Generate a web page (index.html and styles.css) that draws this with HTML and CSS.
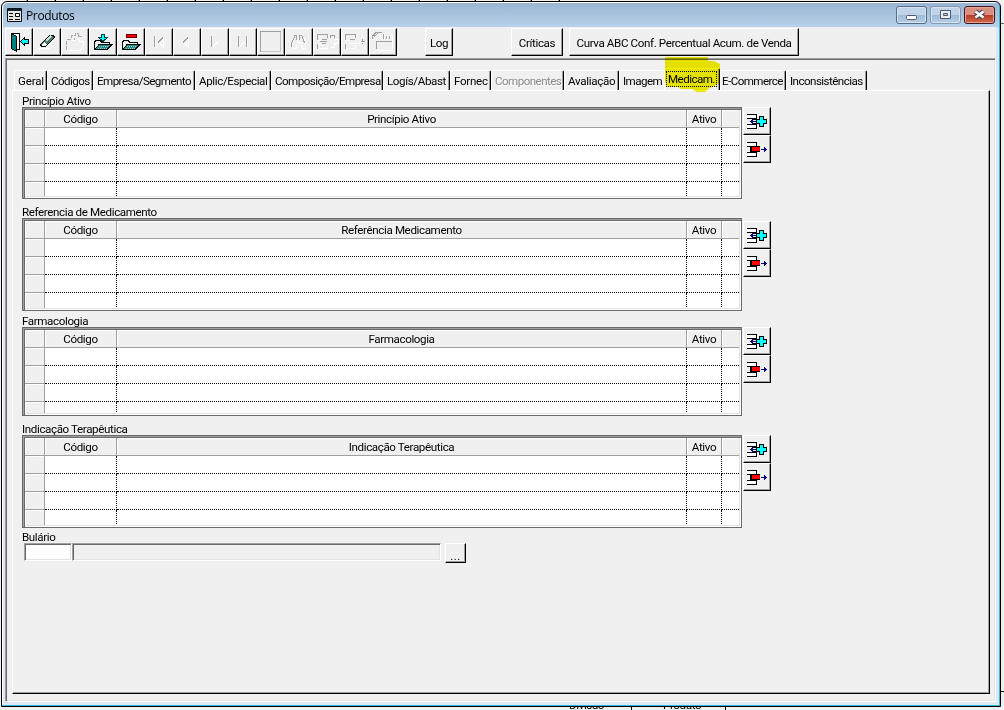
FILE: index.html
```html
<!DOCTYPE html>
<html lang="pt-BR">
<head>
  <meta charset="UTF-8">
  <title>Produtos</title>
  <link rel="stylesheet" href="styles.css">
</head>
<body>
  <svg class="symbols" width="0" height="0">
    <symbol id="row-add" viewBox="0 0 28 28">
      <path d="M4 7h10v5H4zM4 16h10v5H4z" fill="#fff"/>
      <path d="M4 7.500h9.500v4H4M4 21.500h9.500v-4H4M10 12.500h5M10 16.500h5" fill="none" stroke="#000"/>
      <path d="M7 14.500h6M9.500 12v5M8.500 13v3" stroke="#000080" fill="none"/>
      <path d="M16.500 9.500h4v3h3v4h-3v3h-4v-3h-3v-4h3z" fill="#00ffff" stroke="#000"/>
    </symbol>
    <symbol id="row-del" viewBox="0 0 28 28">
      <path d="M4 7h10v5H4zM4 16h10v5H4z" fill="#fff"/>
      <path d="M4 7.500h9.500v4H4M4 21.500h9.500v-4H4" fill="none" stroke="#000"/>
      <path d="M7 12h2v5H7z" fill="#000"/>
      <path d="M8 11h9v6H8z" fill="#000"/>
      <path d="M9 12h8v4H9z" fill="#f00"/>
      <path d="M18 14.500h6M21.500 12v5M22.500 13v3" stroke="#000080"/>
    </symbol>
    <symbol id="folder" viewBox="0 0 28 28">
      <path d="M5.500 21.500v-8l2-1h4l1 2h8v3" fill="#efefef" stroke="#000"/>
      <path d="M6 21.500l4-5h13l-5 5z" fill="#2f8a8a" stroke="#000"/>
      <path d="M10 18.500h10M9 20.500h9" stroke="#8cc" stroke-dasharray="1 1"/>
    </symbol>
  </svg>

  <div class="backdrop">
    <div class="strip"></div>
    <div class="below"><span>Divisão</span><span>Produto</span></div>
    <div class="edge"></div>
  </div>

  <div class="window">
    <div class="titlebar">
      <svg class="app-icon" width="15" height="14" viewBox="0 0 15 14">
        <path d="M.5.5h14v13H.5z" fill="#e6e6e6" stroke="#111"/>
        <path d="M1 1h13v2H1z" fill="#123"/>
        <path d="M2 5.500h4M2 8.500h4M2 11.500h4M8 11.500h5" stroke="#000"/>
        <path d="M8.500 5.500h4v3h-4z" fill="#fff" stroke="#000"/>
      </svg>
      <span class="title">Produtos</span>
      <div class="caption">
        <button><svg width="29" height="16"><rect x="9.500" y="8.500" width="10" height="4" rx="1" fill="#fff" stroke="#535666"/></svg></button>
        <button class="max"><svg width="29" height="16"><path d="M9.500 3.500h10v8h-10z" fill="#e8eef5" stroke="#535666"/><path d="M12.500 6.500h4v2h-4z" fill="#b9cce0" stroke="#535666"/></svg></button>
        <button class="close"><svg width="29" height="16"><path d="M10.500 4.500l8 6M18.500 4.500l-8 6" stroke="#4a4558" stroke-width="4.800"/><path d="M10.500 4.500l8 6M18.500 4.500l-8 6" stroke="#fff" stroke-width="2.600"/></svg></button>
      </div>
    </div>

    <div class="toolbar">
      <button class="tool"><svg viewBox="0 0 28 28">
        <path d="M6.500 20V5.500h8V21H12" fill="#fff" stroke="#000"/>
        <path d="M6.500 5.500l5 3v15l-5-3z" fill="#008080" stroke="#000"/>
        <path d="M15.500 13.500l4-4v2h4v4h-4v2z" fill="#00ffff" stroke="#000"/>
      </svg></button>
      <button class="tool"><svg viewBox="0 0 28 28">
        <path d="M5 20.500h12" stroke="#fff"/>
        <path d="M7.500 16.500l9-9h4l1 2-9 9h-4z" fill="#507878" stroke="#000"/>
        <path d="M8 17l3-3 3 3-2 1H9z" fill="#fff"/>
        <path d="M13 13l5-5" stroke="#cdd" stroke-width="2"/>
      </svg></button>
      <button class="tool"><svg viewBox="0 0 28 28">
        <path d="M5.500 21.500v-10h4M10 9.500v-2h4v-2h3v3h4M13.500 13v-3" fill="none" stroke="#a8a8a8" stroke-dasharray="4 1"/>
        <path d="M6.500 22.500h13l3-5v-4h-4v-3M10.500 12.500h4" fill="none" stroke="#fff"/>
      </svg></button>
      <button class="tool"><svg viewBox="0 0 28 28">
        <use href="#folder"/>
        <path d="M12.500 6.500h3v3h3l-4.500 4-4.500-4h3z" fill="#00ffff" stroke="#004040"/>
      </svg></button>
      <button class="tool"><svg viewBox="0 0 28 28">
        <use href="#folder"/>
        <path d="M9.500 6.500h10v3h-10z" fill="#f00" stroke="#600"/>
      </svg></button>
      <button class="tool"><svg viewBox="0 0 28 28">
        <path d="M9.500 8v11M13 14.500l5-5" stroke="#a0a0a0"/><path d="M10.500 8v12M18.500 9v10l-4-4" stroke="#fff" fill="none"/>
      </svg></button>
      <button class="tool"><svg viewBox="0 0 28 28">
        <path d="M10 14.500l5-5" stroke="#a0a0a0"/><path d="M15.500 9v10l-4-4" stroke="#fff" fill="none"/>
      </svg></button>
      <button class="tool"><svg viewBox="0 0 28 28">
        <path d="M10.500 8v11" stroke="#a0a0a0"/><path d="M11.500 19l5-5" stroke="#fff"/>
      </svg></button>
      <button class="tool"><svg viewBox="0 0 28 28">
        <path d="M9.500 8v11M17.500 8v11" stroke="#a0a0a0"/><path d="M10.500 19l5-5M18.500 8v12" stroke="#fff"/>
      </svg></button>
      <button class="tool"><svg viewBox="0 0 28 28">
        <path d="M3.500 24V3.500H24" stroke="#a0a0a0" fill="none"/><path d="M4 23.500h19.500V4" stroke="#c4c4c4" fill="none"/>
      </svg></button>
      <button class="tool"><svg viewBox="0 0 28 28">
        <path d="M6.500 19v-4l3-6v-2h2v5M14.500 12V7h2l2 5 1 3" stroke="#a0a0a0" fill="none"/><path d="M7 20.500h4v-5M12.500 8v6h3M16.500 15v5h4v-6l-2-5" stroke="#fff" fill="none"/>
      </svg></button>
      <button class="tool"><svg viewBox="0 0 28 28">
        <path d="M4.500 12V6.500h10v3M4.500 21v-5M7 13.500h7M9 11.500h5M17.500 10V7.500h4v2M9 15.500h4" stroke="#a0a0a0" fill="none"/><path d="M5 12.500h3M5 20.500h9v-4M5 16.500h3M18 19.500h3v-4h4v-4h-3" stroke="#fff" fill="none"/>
      </svg></button>
      <button class="tool"><svg viewBox="0 0 28 28">
        <path d="M4.500 12V6.500h10v3M4.500 21v-5M9 11.500h5M20 13.500h4M21.500 11v5" stroke="#a0a0a0" fill="none"/><path d="M5 12.500h3M5 20.500h9v-4M9 15.500h9v-2M20 14.500h5v-3" stroke="#fff" fill="none"/>
      </svg></button>
      <button class="tool"><svg viewBox="0 0 28 28">
        <path d="M3.500 11V8l4-4h5M5 8.500l4-3M14.500 6v5M17.500 8v3M20.500 8v3M7.500 21v-8H23" stroke="#a0a0a0" fill="none"/><path d="M12 8l-4 3M15.500 7v5M18.500 7v5M21.500 7v5M23.500 7v16M8 22.500h15" stroke="#fff" fill="none"/>
      </svg></button>
      <button class="tool log">Log</button>
      <button class="tool criticas">Críticas</button>
      <button class="tool curva">Curva ABC Conf. Percentual Acum. de Venda</button>
    </div>

    <div class="client">
      <div class="tabs">
        <div class="tab">Geral</div>
        <div class="tab">Códigos</div>
        <div class="tab">Empresa/Segmento</div>
        <div class="tab">Aplic/Especial</div>
        <div class="tab">Composição/Empresa</div>
        <div class="tab">Logís/Abast</div>
        <div class="tab">Fornec</div>
        <div class="tab disabled">Componentes</div>
        <div class="tab">Avaliação</div>
        <div class="tab">Imagem</div>
        <div class="tab active"><span>Medicam.</span>
          <svg class="marker" width="56" height="36" viewBox="0 0 56 36"><path d="M1 0h43v4h6l6 3-1 19-3 2-8 4-3 3h-8l-5-3H17l-3-2H3l-2-6z" fill="#f3f000"/></svg>
        </div>
        <div class="tab">E-Commerce</div>
        <div class="tab">Inconsistências</div>
      </div>

      <div class="panel">
        <section class="block principio">
          <h2>Princípio Ativo</h2>
          <div class="row">
            <div class="frame"><table class="grid">
              <tr><th></th><th>Código</th><th>Princípio Ativo</th><th>Ativo</th><th></th></tr>
              <tr><td></td><td></td><td></td><td></td><td></td></tr>
              <tr><td></td><td></td><td></td><td></td><td></td></tr>
              <tr><td></td><td></td><td></td><td></td><td></td></tr>
              <tr><td></td><td></td><td></td><td></td><td></td></tr>
            </table></div>
            <div class="actions">
              <button class="tool"><svg><use href="#row-add"/></svg></button>
              <button class="tool"><svg><use href="#row-del"/></svg></button>
            </div>
          </div>
        </section>

        <section class="block referencia">
          <h2>Referencia de Medicamento</h2>
          <div class="row">
            <div class="frame"><table class="grid">
              <tr><th></th><th>Código</th><th>Referência Medicamento</th><th>Ativo</th><th></th></tr>
              <tr><td></td><td></td><td></td><td></td><td></td></tr>
              <tr><td></td><td></td><td></td><td></td><td></td></tr>
              <tr><td></td><td></td><td></td><td></td><td></td></tr>
              <tr><td></td><td></td><td></td><td></td><td></td></tr>
            </table></div>
            <div class="actions">
              <button class="tool"><svg><use href="#row-add"/></svg></button>
              <button class="tool"><svg><use href="#row-del"/></svg></button>
            </div>
          </div>
        </section>

        <section class="block farmacologia">
          <h2>Farmacologia</h2>
          <div class="row">
            <div class="frame"><table class="grid">
              <tr><th></th><th>Código</th><th>Farmacologia</th><th>Ativo</th><th></th></tr>
              <tr><td></td><td></td><td></td><td></td><td></td></tr>
              <tr><td></td><td></td><td></td><td></td><td></td></tr>
              <tr><td></td><td></td><td></td><td></td><td></td></tr>
              <tr><td></td><td></td><td></td><td></td><td></td></tr>
            </table></div>
            <div class="actions">
              <button class="tool"><svg><use href="#row-add"/></svg></button>
              <button class="tool"><svg><use href="#row-del"/></svg></button>
            </div>
          </div>
        </section>

        <section class="block indicacao">
          <h2>Indicação Terapêutica</h2>
          <div class="row">
            <div class="frame"><table class="grid">
              <tr><th></th><th>Código</th><th>Indicação Terapêutica</th><th>Ativo</th><th></th></tr>
              <tr><td></td><td></td><td></td><td></td><td></td></tr>
              <tr><td></td><td></td><td></td><td></td><td></td></tr>
              <tr><td></td><td></td><td></td><td></td><td></td></tr>
              <tr><td></td><td></td><td></td><td></td><td></td></tr>
            </table></div>
            <div class="actions">
              <button class="tool"><svg><use href="#row-add"/></svg></button>
              <button class="tool"><svg><use href="#row-del"/></svg></button>
            </div>
          </div>
        </section>

        <section class="block bulario">
          <h2>Bulário</h2>
          <div class="row">
            <input class="field code" type="text">
            <input class="field name" type="text" readonly>
            <button class="tool browse">...</button>
          </div>
        </section>
      </div>
    </div>
  </div>
</body>
</html>
```
FILE: styles.css
```css
* {
  box-sizing: border-box;
}

:root {
  --face: #f0f0f0;
  --shadow: #a0a0a0;
  --dark: #696969;
  --light: #e3e3e3;
}

body {
  margin: 0;
  width: 1004px;
  height: 710px;
  overflow: hidden;
  position: relative;
  background: var(--face);
  font-family: Roboto, "Liberation Sans", sans-serif;
  font-size: 11.6px;
  line-height: 14px;
  letter-spacing: -0.38px;
  color: #000;
}

.symbols {
  position: absolute;
}

/* window behind */
.strip {
  position: absolute;
  top: 0;
  left: 0;
  width: 567px;
  height: 2px;
  background: repeating-linear-gradient(90deg, #f0f0f0 0 26px, #a0a0a0 26px 27px, #000 27px 28px);
}

.below {
  position: absolute;
  top: 700px;
  left: 569px;
  display: flex;
  gap: 31px;
  line-height: 10px;
}

.below span {
  width: 63px;
  border-right: 1px solid #000;
  white-space: nowrap;
}

.edge {
  position: absolute;
  top: 23px;
  right: 0;
  width: 4px;
  height: 669px;
  border-top: 1px solid var(--dark);
  border-bottom: 1px solid #000;
}

.window {
  position: relative;
  margin: 1px 0 0 1px;
  width: 1000px;
  height: 706px;
  padding: 1px 4px 3px 3px;
  border: 1px solid #000;
  border-radius: 6px 6px 0 0;
  background: linear-gradient(#98b4d2, #b9d1ea 25px, #dce6f4 26px, #dce6f4);
  box-shadow: inset -1px -1px #35b8d8, inset 1px 1px #fff;
}

.titlebar {
  display: flex;
  height: 24px;
  padding: 0 1px 0 2px;
}

.app-icon {
  margin-top: 5px;
}

.title {
  margin: 5px auto 0 4px;
  font-family: "Open Sans", "Noto Sans", sans-serif;
  font-size: 12px;
  line-height: 16px;
  letter-spacing: -0.35px;
}

.caption {
  display: flex;
  gap: 3px;
  margin-top: 3px;
}

.caption button {
  width: 31px;
  height: 18px;
  padding: 0;
  border: 1px solid #566b84;
  border-radius: 3px;
  box-shadow: inset 0 0 0 1px #d5e3f2;
  background: linear-gradient(#c0d3e8 50%, #9db9d6 50%, #b8d0e8);
}

.caption svg {
  display: block;
}

.caption .max {
  border-color: #8397af;
}

.caption .close {
  border-color: #43131b;
  box-shadow: inset 0 0 0 1px #e2a79b;
  background: linear-gradient(#d98e7e 50%, #b93b22 50%, #cf6a4c);
}

.toolbar {
  display: flex;
  height: 31px;
  padding-top: 1px;
  background: var(--face);
}

.tool {
  flex: none;
  width: 28px;
  height: 28px;
  padding: 0;
  border: 1px solid;
  border-color: #fff #000 #000 #fff;
  background: var(--face);
  box-shadow: inset -1px -1px var(--shadow);
  color: #000;
  font: inherit;
  letter-spacing: inherit;
  white-space: nowrap;
}

.tool svg {
  display: block;
  width: 28px;
  height: 28px;
  margin: -1px;
  shape-rendering: crispEdges;
}

.log {
  margin-left: 28px;
  padding-top: 2px;
}

.criticas {
  width: 52px;
  margin-left: 58px;
  padding-top: 2px;
}

.curva {
  width: 230px;
  margin-left: 6px;
  padding-top: 2px;
}

.client {
  height: 644px;
  padding: 11px 6px 8px;
  border: 1px solid;
  border-color: var(--shadow) #fff #fff var(--shadow);
  box-shadow: inset 1px 1px var(--dark), inset -1px -1px var(--light);
  background: var(--face);
}

.tabs {
  display: flex;
  height: 20px;
  padding-left: 2px;
}

.tab {
  flex: none;
  height: 20px;
  padding: 3px 0 0 3px;
  border: 1px solid;
  border-color: #fff #000 transparent #fff;
  border-bottom: 0;
  border-radius: 2px 2px 0 0;
  box-shadow: inset -1px 0 var(--shadow);
  letter-spacing: -0.55px;
  white-space: nowrap;
}

.tab:nth-child(1) { width: 33px; letter-spacing: -0.2px; }
.tab:nth-child(2) { width: 46px; }
.tab:nth-child(3) { width: 102px; }
.tab:nth-child(4) { width: 76px; letter-spacing: -0.38px; }
.tab:nth-child(5) { width: 112px; }
.tab:nth-child(6) { width: 67px; letter-spacing: -0.38px; }
.tab:nth-child(7) { width: 41px; letter-spacing: -0.3px; }
.tab:nth-child(8) { width: 73px; }
.tab:nth-child(9) { width: 55px; letter-spacing: -0.3px; }
.tab:nth-child(10) { width: 45px; border-right-color: transparent; box-shadow: none; }
.tab:nth-child(11) { width: 56px; }
.tab:nth-child(12) { width: 66px; padding-left: 1px; }
.tab:nth-child(13) { width: 81px; }

.tab.disabled {
  color: #8a8a8a;
  text-shadow: 1px 1px #fff;
}

.tab.active {
  position: relative;
  height: 22px;
  margin-top: -2px;
  padding: 2px 0 0 1px;
  background: var(--face);
}

.tab.active span {
  display: block;
  width: 51px;
  height: 16px;
  border: 1px dotted #000;
  padding-left: 1px;
  line-height: 14px;
}

.marker {
  position: absolute;
  left: -1px;
  top: -12px;
  mix-blend-mode: multiply;
}

.panel {
  width: 978px;
  height: 604px;
  padding-left: 9px;
  border: 1px solid;
  border-color: #fff #000 #000 #fff;
  box-shadow: inset -1px -1px var(--shadow);
}

.block h2 {
  display: flex;
  align-items: flex-end;
  height: 16px;
  margin: 0;
  font-size: inherit;
  font-weight: normal;
  line-height: 11px;
}

.referencia h2,
.indicacao h2 {
  height: 19px;
}

.bulario h2 {
  height: 15px;
  line-height: 12px;
}

.row {
  display: flex;
  gap: 1px;
}

.frame {
  display: flex;
  width: 720px;
  height: 93px;
  overflow: hidden;
  border: 1px solid var(--dark);
  padding: 2px;
  background: var(--face);
  box-shadow: inset 1px 1px var(--shadow), inset 2px 2px var(--dark), inset -1px -1px #fff, inset -2px -2px var(--light);
}

.principio .frame { height: 92px; }
.farmacologia .frame { height: 89px; }

.grid {
  display: block;
  width: 714px;
  overflow: hidden;
  background: #fff;
}

.grid tbody {
  display: block;
}

.grid tr {
  display: grid;
  grid-template-columns: 20px 72px 570px 35px 17px;
  height: 18px;
}

.grid th {
  padding: 2px 0 0;
  border-right: 1px solid var(--shadow);
  border-bottom: 1px solid var(--shadow);
  background: var(--face);
  box-shadow: inset 1px 1px #fff;
  font-weight: normal;
  line-height: 14px;
}

.grid th:last-child {
  border-right: 0;
}

.grid td {
  padding: 0;
  border-right: 1px dotted #000;
  border-bottom: 1px dotted #000;
}

.grid td:first-child {
  border-right: 1px solid var(--shadow);
  border-bottom: 1px solid var(--shadow);
  background: var(--face);
  box-shadow: inset 1px 1px #fff;
}

.grid td:last-child {
  border-right: 0;
}

.grid tr:last-child td {
  border-bottom: 0;
}

.actions {
  display: flex;
  flex-direction: column;
}

.referencia .actions {
  margin-top: 3px;
}

.bulario .row {
  gap: 0;
  padding-left: 2px;
}

.field {
  width: 48px;
  height: 18px;
  padding: 0;
  border: 1px solid;
  border-color: var(--shadow) #fff #fff var(--shadow);
  border-radius: 0;
  box-shadow: inset 1px 1px var(--dark), inset -1px -1px var(--light);
  background: #fff;
  font: inherit;
}

.field.name {
  width: 369px;
  background: var(--face);
}

.browse {
  width: 21px;
  height: 20px;
  margin-left: 4px;
  padding-top: 5px;
  letter-spacing: 0.4px;
}
```
